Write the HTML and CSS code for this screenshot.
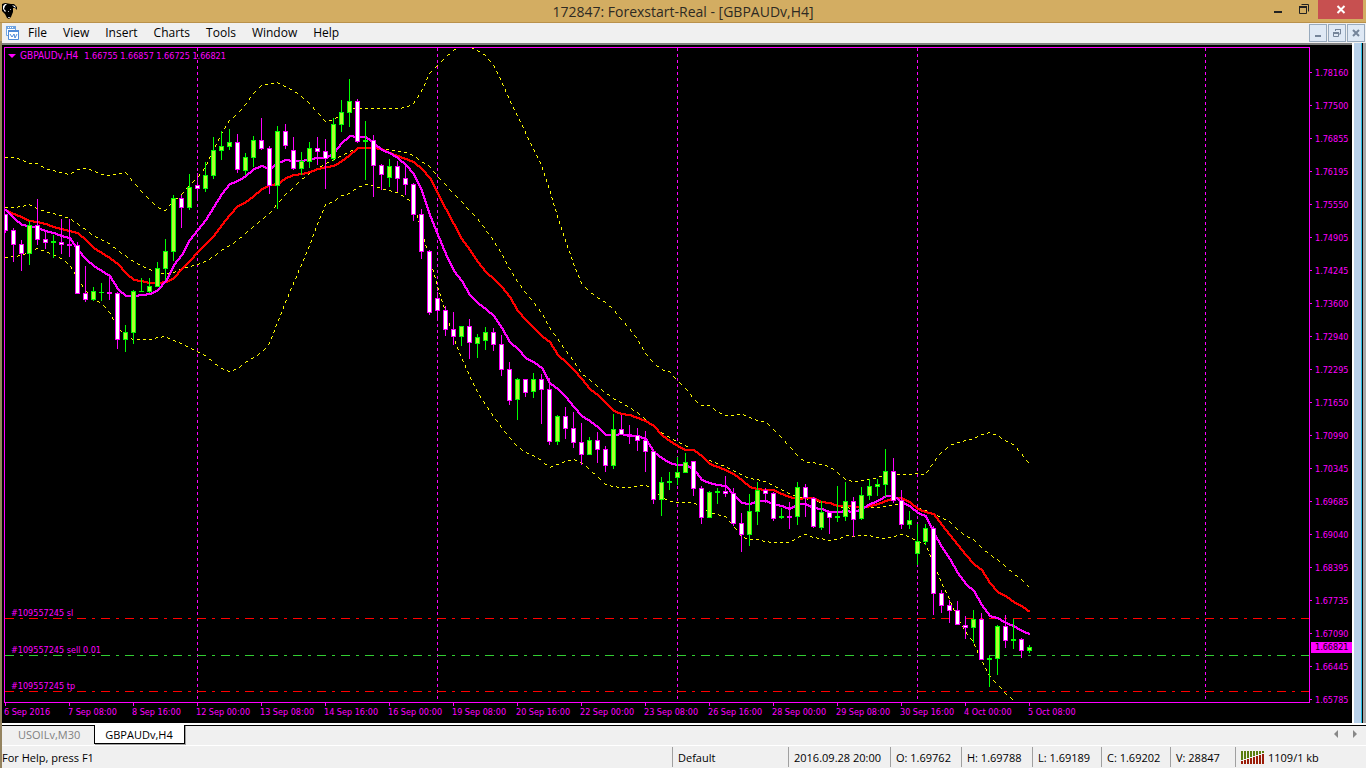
FILE: index.html
```html
<!DOCTYPE html>
<html lang="en">
<head>
<meta charset="utf-8">
<title>172847: Forexstart-Real - [GBPAUDv,H4]</title>
<link rel="stylesheet" href="styles.css">
</head>
<body>
<div class="app">
  <header class="titlebar">
    <svg class="logo" width="16" height="17" viewBox="0 0 16 17" aria-hidden="true">
      <path d="M0 1 L3 0 L9 1 L12 1 L15 4 L15 7 L13 5 L11 5 L11 9 L9 14 L7 16 L5 15 L3 11 L0 8 Z" fill="#000"/>
      <path d="M1 3 L3 1 L5 1 L3 3 L2 6 L4 8 L3 9 L1 6 Z M10 2 L13 3 L14 5 L12 4 Z" fill="#fff"/>
      <path d="M6 8h1v1h-1z M8 6h1v1h-1z M6 14h2v1h-2z" fill="#bbb"/>
    </svg>
    <h1 class="caption">172847: Forexstart-Real - [GBPAUDv,H4]</h1>
    <div class="window-buttons">
      <button class="win" aria-label="Minimize"><svg width="12" height="18"><path d="M2 11h8v2h-8z" fill="#222"/></svg></button>
      <button class="win" aria-label="Restore"><svg width="12" height="18"><path d="M1.5 6.5h7v7h-7z M3.5 4.5h7v7" fill="none" stroke="#222"/><path d="M1 6h8v2h-8z" fill="#222"/></svg></button>
      <button class="win close" aria-label="Close"><svg width="10" height="18"><path d="M1.5 6l7 7M8.500 6l-7 7" stroke="#fff" stroke-width="2"/></svg></button>
    </div>
  </header>

  <div class="frame">
    <div class="inner">
      <nav class="menubar">
        <svg class="doc-icon" width="15" height="15" viewBox="0 0 15 15" aria-hidden="true">
          <path d="M1.500 .5h9v9h-9z" fill="#fff" stroke="#6fa3e0"/>
          <path d="M1 0h10v3h-10z" fill="#6fa3e0"/>
          <path d="M3 1h1v1h-1z M5 1h1v1h-1z M7 1h1v1h-1z" fill="#fff"/>
          <path d="M3.500 4.500h10v9h-10z" fill="#fff" stroke="#4f8ad8"/>
          <path d="M3 4h11v2h-11z" fill="#4f8ad8"/>
          <path d="M5 8l2 3 2-3 1 4 2-4" fill="none" stroke="#4f8ad8"/>
        </svg>
        <button class="menu">File</button><button class="menu">View</button><button class="menu">Insert</button><button class="menu">Charts</button><button class="menu">Tools</button><button class="menu">Window</button><button class="menu">Help</button>
        <div class="mdi-buttons">
          <button class="mdi" aria-label="Minimize chart"><svg width="10" height="10"><path d="M2 7h6v2h-6z" fill="#75859a"/></svg></button>
          <button class="mdi" aria-label="Restore chart"><svg width="10" height="10"><path d="M1.500 4.500h5v4h-5z M3.500 3v-1.500h5v4.500h-1.500" fill="none" stroke="#75859a"/><path d="M1 4h6v2h-6z M3 1h6v1h-6z" fill="#75859a"/></svg></button>
          <button class="mdi" aria-label="Close chart"><svg width="10" height="10"><path d="M2 2l6 6M8 2l-6 6" stroke="#75859a" stroke-width="2"/></svg></button>
        </div>
      </nav>

      <div class="workspace">
        <main class="chart">
          <section class="plot">
            <svg id="plot" class="plot-svg" width="100%" height="100%" role="img" aria-label="GBPAUDv H4 candlestick chart"></svg>
            <p class="symbol"><svg width="8" height="4" aria-hidden="true"><path d="M0 0h8l-4 4z" fill="#f0f"/></svg><span class="ticker">GBPAUDv,H4</span><span>1.66755 1.66857 1.66725 1.66821</span></p>
            <p class="order sl">#109557245 sl</p>
            <p class="order sell">#109557245 sell 0.01</p>
            <p class="order tp">#109557245 tp</p>
          </section>
          <div class="prices">
            <span>1.78160</span><span>1.77500</span><span>1.76855</span><span>1.76195</span><span>1.75550</span><span>1.74905</span><span>1.74245</span><span>1.73600</span><span>1.72940</span><span>1.72295</span><span>1.71650</span><span>1.70990</span><span>1.70345</span><span>1.69685</span><span>1.69040</span><span>1.68395</span><span>1.67735</span><span>1.67090</span><span>1.66445</span><span>1.65785</span>
            <b class="current">1.66821</b>
          </div>
          <div class="times">
            <span>6 Sep 2016</span><span>7 Sep 08:00</span><span>8 Sep 16:00</span><span>12 Sep 00:00</span><span>13 Sep 08:00</span><span>14 Sep 16:00</span><span>16 Sep 00:00</span><span>19 Sep 08:00</span><span>20 Sep 16:00</span><span>22 Sep 00:00</span><span>23 Sep 08:00</span><span>26 Sep 16:00</span><span>28 Sep 00:00</span><span>29 Sep 08:00</span><span>30 Sep 16:00</span><span>4 Oct 00:00</span><span>5 Oct 08:00</span>
          </div>
        </main>
        <div class="edge"></div>
      </div>

      <div class="tabs">
        <button class="tab">USOILv,M30</button><button class="tab active">GBPAUDv,H4</button>
        <div class="tab-scroll">
          <button class="arrow" aria-label="Scroll left"><svg width="4" height="8"><path d="M4 0v8l-4-4z" fill="#888"/></svg></button>
          <button class="arrow" aria-label="Scroll right"><svg width="4" height="8"><path d="M0 0v8l4-4z" fill="#888"/></svg></button>
        </div>
      </div>

      <footer class="status">
        <span class="help">For Help, press F1</span>
        <span class="cell profile">Default</span>
        <span class="cell date">2016.09.28 20:00</span>
        <span class="cell price">O: 1.69762</span>
        <span class="cell price">H: 1.69788</span>
        <span class="cell low">L: 1.69189</span>
        <span class="cell low">C: 1.69202</span>
        <span class="cell volume">V: 28847</span>
        <span class="cell traffic"><svg width="23" height="13" viewBox="0 0 23 13" aria-hidden="true">
          <path d="M0 0h2v9h-2z M3 0h2v8h-2z M6 0h2v7h-2z M9 0h2v6h-2z M12 0h2v5h-2z M15 0h2v4h-2z M18 0h2v3h-2z M21 0h2v2h-2z" fill="#5a7d10"/>
          <path d="M0 10h2v3h-2z M3 9h2v4h-2z M6 8h2v5h-2z M9 7h2v6h-2z M12 6h2v7h-2z M15 5h2v8h-2z M18 4h2v9h-2z M21 3h2v10h-2z" fill="#9b1c08"/>
        </svg>1109/1 kb</span>
      </footer>
    </div>
  </div>
</div>
<script src="chart.js"></script>
</body>
</html>
```

FILE: styles.css
```css
* { box-sizing: border-box; }
html, body { height: 100%; margin: 0; }
body { overflow: hidden; background: #f0f0f0; color: #000; font-family: "Open Sans", "Noto Sans", sans-serif; font-size: 12px; }
button { margin: 0; padding: 0; border: 0; background: none; color: inherit; font: inherit; }
svg { display: block; flex: none; }
p, h1 { margin: 0; }

.app { display: flex; flex-direction: column; height: 100vh; }

.titlebar { display: grid; grid-template-columns: 1fr auto 1fr; flex: none; height: 23px; background: #d3ad62; border-bottom: 1px solid #b9914b; }
.logo { margin: 3px 0 0 2px; }
.caption { font-size: 14px; font-weight: 400; line-height: 23px; color: #2e2a22; }
.window-buttons { display: flex; justify-content: flex-end; padding-right: 3px; }
.win { display: flex; justify-content: center; align-items: flex-start; width: 26px; height: 19px; }
.win.close { width: 45px; margin-left: 1px; background: #c75050; }

.frame { display: flex; flex: 1; min-height: 0; padding-left: 2px; background: linear-gradient(#c3a468 0, #c3a468 18px, #94835f 18px, #94835f 100%); }
.inner { display: flex; flex: 1; flex-direction: column; min-width: 0; background: #f0f0f0; }

.menubar { display: flex; flex: none; align-items: center; height: 20px; padding-left: 3px; }
.menu { height: 20px; padding: 0 8px; line-height: 20px; }
.doc-icon { margin-right: 0; }
.mdi-buttons { display: flex; gap: 1px; margin-left: auto; padding-right: 1px; }
.mdi { display: flex; justify-content: center; align-items: center; width: 18px; height: 18px; border: 1px solid #98aabd; background: #dfe9f5; }

.workspace { display: flex; flex: 1; min-height: 0; border-bottom: 2px solid #fff; }
.chart { display: grid; flex: 1; grid-template-columns: 1fr 42px; grid-template-rows: 1fr 20px; min-width: 0; padding: 2px 0 0 2px; border-top: 2px solid #808080; background: #000; color: #f0f; font-family: "DejaVu Sans Condensed", "DejaVu Sans", sans-serif; font-size: 9px; }
.plot { position: relative; min-width: 0; min-height: 0; border: 1px solid #f0f; overflow: hidden; }
.plot-svg { position: absolute; inset: 0; }
.symbol { position: relative; display: flex; align-items: center; gap: 4px; padding: 2px 0 0 3px; line-height: 12px; }
.ticker { margin-right: 2px; font-size: 10px; }
.order { position: absolute; left: 6px; line-height: 12px; }
.sl { top: 559px; }
.sell { top: 596px; }
.tp { top: 632px; }

.prices { position: relative; display: flex; flex-direction: column; min-height: 0; padding-top: 9px; }
.prices span { display: flex; flex: none; align-items: center; gap: 3px; height: 33px; }
.prices span::before { width: 2px; height: 1px; background: #f0f; content: ""; }
.current { position: absolute; top: 595px; left: 1px; right: 0; padding-left: 4px; background: #f0f; color: #000; font-weight: 400; line-height: 11px; }

.times { display: flex; grid-column: 1 / 3; overflow: hidden; }
.times span { flex: none; width: 64px; line-height: 12px; white-space: nowrap; }
.times span::before { display: block; width: 1px; height: 3px; margin-left: 1px; background: #f0f; content: ""; }

.edge { flex: none; width: 14px; border-right: 3px solid #a9a9a9; border-left: 2px solid #fff; background: linear-gradient(90deg, #b9d1ea 7px, #27bfe2 7px, #27bfe2 8px, #000 8px); }

.tabs { display: flex; flex: none; height: 21px; border-top: 1px solid #000; border-bottom: 1px solid #fff; font-size: 11px; }
.tab { height: 18px; padding: 0 14px 0 16px; color: #808080; line-height: 18px; }
.tab.active { height: 19px; margin-top: -1px; padding: 0 11px 0 10px; border: solid #000; border-width: 0 1px 1px; background: #fff; box-shadow: 1px 1px #a0a0a0; color: #000; line-height: 20px; }
.tab-scroll { display: flex; gap: 15px; margin-left: auto; padding: 4px 9px 0 0; align-items: flex-start; }

.status { display: flex; flex: none; align-items: center; height: 22px; font-size: 11px; white-space: nowrap; }
.help { flex: 1; }
.cell { display: flex; flex: none; align-items: center; gap: 4px; height: 20px; padding-left: 5px; border-left: 1px solid #a0a0a0; }
.profile { width: 116px; }
.date { width: 102px; }
.price { width: 71px; }
.low { width: 69px; }
.volume { width: 65px; }
.traffic { width: 131px; }
```

FILE: chart.js
```js
// One candle per 8 px. Each row: high, body top, body bottom, low, direction (1 = up).
const TOP = 48;
const STEP = 8;
const candles = [
[214,214,231,233,0],[228,230,245,262,0],[240,244,254,271,0],[221,225,254,265,1],[199,225,240,245,0],[232,239,243,249,0],[235,241,243,258,1],[219,242,245,254,0],
[219,244,246,257,0],[242,245,294,294,0],[266,293,300,302,0],[287,291,300,301,1],[283,292,293,301,1],[275,292,294,300,0],[292,293,340,349,0],[325,332,340,352,1],
[290,291,333,344,1],[278,291,292,292,1],[278,286,292,293,1],[262,268,287,287,1],[239,251,269,280,1],[195,198,252,261,1],[195,198,208,228,0],[174,187,208,210,1],
[173,185,189,199,0],[162,175,189,192,1],[137,150,176,179,1],[131,146,151,160,1],[129,142,147,150,1],[134,142,170,173,0],[153,157,171,175,1],[136,140,158,167,1],
[118,140,149,150,0],[146,148,186,194,0],[126,131,186,209,1],[124,131,146,149,0],[137,150,169,170,0],[152,161,169,175,1],[142,148,162,168,1],[137,148,152,165,0],
[139,151,159,189,0],[118,124,159,161,1],[100,112,125,132,1],[79,101,113,127,1],[99,101,142,143,0],[121,140,142,180,1],[135,140,166,197,0],[164,165,175,190,0],
[159,166,178,187,1],[161,166,179,192,0],[166,178,185,195,0],[183,184,215,221,0],[209,214,252,259,0],[250,251,313,315,0],[292,298,311,320,0],[306,310,330,336,0],
[312,329,337,345,0],[326,326,337,346,1],[319,326,343,359,0],[334,337,344,358,1],[327,332,341,350,1],[328,332,345,351,0],[335,344,370,376,0],[362,369,401,405,0],
[378,379,400,420,1],[379,379,393,397,0],[373,379,392,398,1],[374,379,390,424,0],[378,389,442,445,0],[415,416,442,445,1],[407,416,429,439,0],[412,428,443,448,0],
[423,442,455,465,0],[437,440,455,455,1],[432,440,450,463,0],[446,449,466,472,0],[414,429,466,469,1],[415,429,435,435,0],[425,434,435,444,0],[428,435,441,451,0],
[431,440,452,472,0],[450,451,500,504,0],[477,482,500,516,1],[472,481,483,490,1],[457,472,478,485,1],[453,462,473,473,1],[461,461,489,496,0],[486,488,518,524,0],
[491,492,518,518,1],[488,491,493,504,1],[476,491,494,497,0],[488,493,524,526,0],[513,523,535,552,0],[494,511,535,546,1],[482,490,512,525,1],[488,490,494,503,0],
[492,493,519,521,0],[508,516,518,519,1],[502,516,518,529,0],[482,487,517,525,1],[484,487,498,517,0],[497,498,527,528,0],[501,512,528,530,1],[511,512,518,534,0],
[486,516,518,522,1],[482,501,517,521,1],[497,501,520,537,0],[487,495,519,520,1],[479,486,496,500,1],[479,484,487,496,1],[449,471,485,497,1],[458,471,501,503,0],
[490,500,525,529,0],[511,520,525,529,1],[524,541,554,565,1],[524,528,542,545,1],[526,528,594,615,0],[590,593,606,613,0],[600,605,611,623,0],[601,610,625,625,0],
[616,625,628,639,0],[610,619,628,643,1],[613,619,660,660,0],[655,658,660,687,1],[625,626,659,675,1],[615,626,641,648,0],[619,639,641,649,1],[638,639,651,658,0],[645,647,651,653,1]
];
const fast = [209,217,224,225,227,230,232,235,237,249,258,265,270,275,288,295,295,294,293,289,280,264,254,239,229,219,206,193,183,180,175,168,165,168,162,159,160,160,158,157,157,152,142,135,136,136,142,149,152,157,164,173,190,214,234,253,270,280,294,302,308,315,327,341,348,357,361,367,382,388,396,406,415,420,426,434,434,433,435,435,438,451,457,462,464,464,468,479,482,484,485,494,502,503,500,500,503,505,508,503,503,507,508,511,511,510,511,508,503,500,495,495,501,505,512,515,532,546,558,572,583,590,604,615,617,622,625,630,633];
const slow = [209,213,216,220,221,223,226,228,230,232,239,247,252,257,263,272,279,280,282,282,281,277,268,260,251,243,235,224,214,205,201,195,188,184,183,177,174,173,171,168,166,165,160,154,147,147,147,148,152,155,158,161,168,177,193,208,223,238,249,261,271,278,286,296,310,319,327,335,341,354,361,369,378,388,394,402,410,413,414,417,420,425,434,440,445,449,449,455,463,466,469,473,479,486,488,489,489,493,496,498,497,497,501,502,505,505,505,507,505,503,500,497,497,501,508,511,513,524,534,544,554,563,569,582,591,595,601,605,611];
const upper = [157,157,159,163,163,168,170,172,174,169,168,170,174,175,173,172,182,191,199,207,210,201,194,185,177,167,149,133,120,113,104,93,85,83,82,86,90,96,103,112,121,119,114,107,108,108,108,108,108,108,107,103,91,73,65,57,50,45,46,50,55,65,81,99,116,132,149,165,189,216,240,263,283,291,297,302,309,319,328,339,353,362,369,371,380,388,398,405,405,411,415,415,413,417,420,421,429,437,446,455,462,462,464,466,472,479,481,480,479,477,474,473,474,474,473,474,462,452,445,442,440,438,434,432,435,440,444,453,464];
const middle = [207,207,206,204,208,211,213,215,218,223,229,235,239,243,250,255,261,265,269,272,273,272,268,266,264,261,256,250,245,240,233,226,219,213,203,194,187,179,173,168,163,160,155,151,148,147,147,149,149,151,152,155,161,166,176,184,193,201,210,218,229,240,253,268,281,292,302,312,327,338,350,360,373,379,386,392,398,402,407,412,419,427,432,437,441,445,450,456,460,463,466,470,474,478,479,481,485,489,493,496,498,500,502,503,506,507,508,507,507,507,506,504,504,505,507,510,513,517,521,529,535,539,547,554,559,566,573,579,587];
const lower = [257,256,255,251,248,251,254,258,264,278,290,298,303,312,327,335,339,339,339,337,336,340,343,347,351,355,362,368,371,368,362,357,352,343,322,302,283,264,245,224,204,201,195,193,187,184,185,188,190,192,197,203,230,257,286,311,337,357,375,392,404,416,427,437,446,452,455,460,467,464,461,459,462,469,476,484,486,487,487,486,484,490,496,501,502,502,502,507,512,514,516,525,536,539,539,541,542,542,542,537,534,537,538,540,539,535,536,535,535,537,538,536,534,536,541,543,563,582,599,617,631,642,660,675,684,693,700];

const svg = document.getElementById('plot');
function add(name, attrs) {
  const el = document.createElementNS('http://www.w3.org/2000/svg', name);
  for (const key in attrs) el.setAttribute(key, attrs[key]);
  svg.appendChild(el);
}

// Visits every pixel on the segments that join a series.
function trace(series, visit) {
  let count = 0;
  for (let i = 0; i + 1 < series.length; i++) {
    const dy = series[i + 1] - series[i];
    const n = Math.max(STEP, Math.abs(dy));
    for (let k = 0; k < n; k++) {
      visit(i * STEP + Math.round(k * STEP / n), Math.round(series[i] + k * dy / n) - TOP, count++);
    }
  }
}
function dotted(series) {
  let d = '';
  trace(series, (x, y, c) => { if (c % 6 < 3) d += `M${x} ${y}h1v1h-1z`; });
  add('path', { d, fill: '#ff0', 'shape-rendering': 'crispEdges' });
}
function solid(series, fill) {
  let d = '';
  trace(series, (x, y) => { d += `M${x} ${y}h2v2h-2z`; });
  add('path', { d, fill, 'shape-rendering': 'crispEdges' });
}

for (const x of [192, 432, 672, 912, 1200]) {
  add('line', { x1: x + 0.5, x2: x + 0.5, y1: 0, y2: '100%', stroke: '#f0f', 'stroke-dasharray': '3 3', 'shape-rendering': 'crispEdges' });
}
for (const [y, stroke] of [[618, '#f00'], [655, '#32cd32'], [691, '#f00']]) {
  add('line', { x1: 0, x2: '100%', y1: y - TOP + 0.5, y2: y - TOP + 0.5, stroke, 'stroke-dasharray': '9 6 3 6', 'shape-rendering': 'crispEdges' });
}
[upper, middle, lower].forEach(dotted);
solid(slow, '#f00');
solid(fast, '#f0f');

candles.forEach(([high, top, bottom, low, up], i) => {
  const x = i * STEP;
  const edge = up ? '#0f0' : '#f0f';
  add('rect', { x, y: high - TOP, width: 1, height: low - high, fill: edge });
  add('rect', { x: x - 2, y: top - TOP, width: 5, height: bottom - top, fill: edge });
  if (bottom - top > 2) {
    add('rect', { x: x - 1, y: top - TOP + 1, width: 3, height: bottom - top - 2, fill: up ? '#adff2f' : '#fff' });
  }
});
```
